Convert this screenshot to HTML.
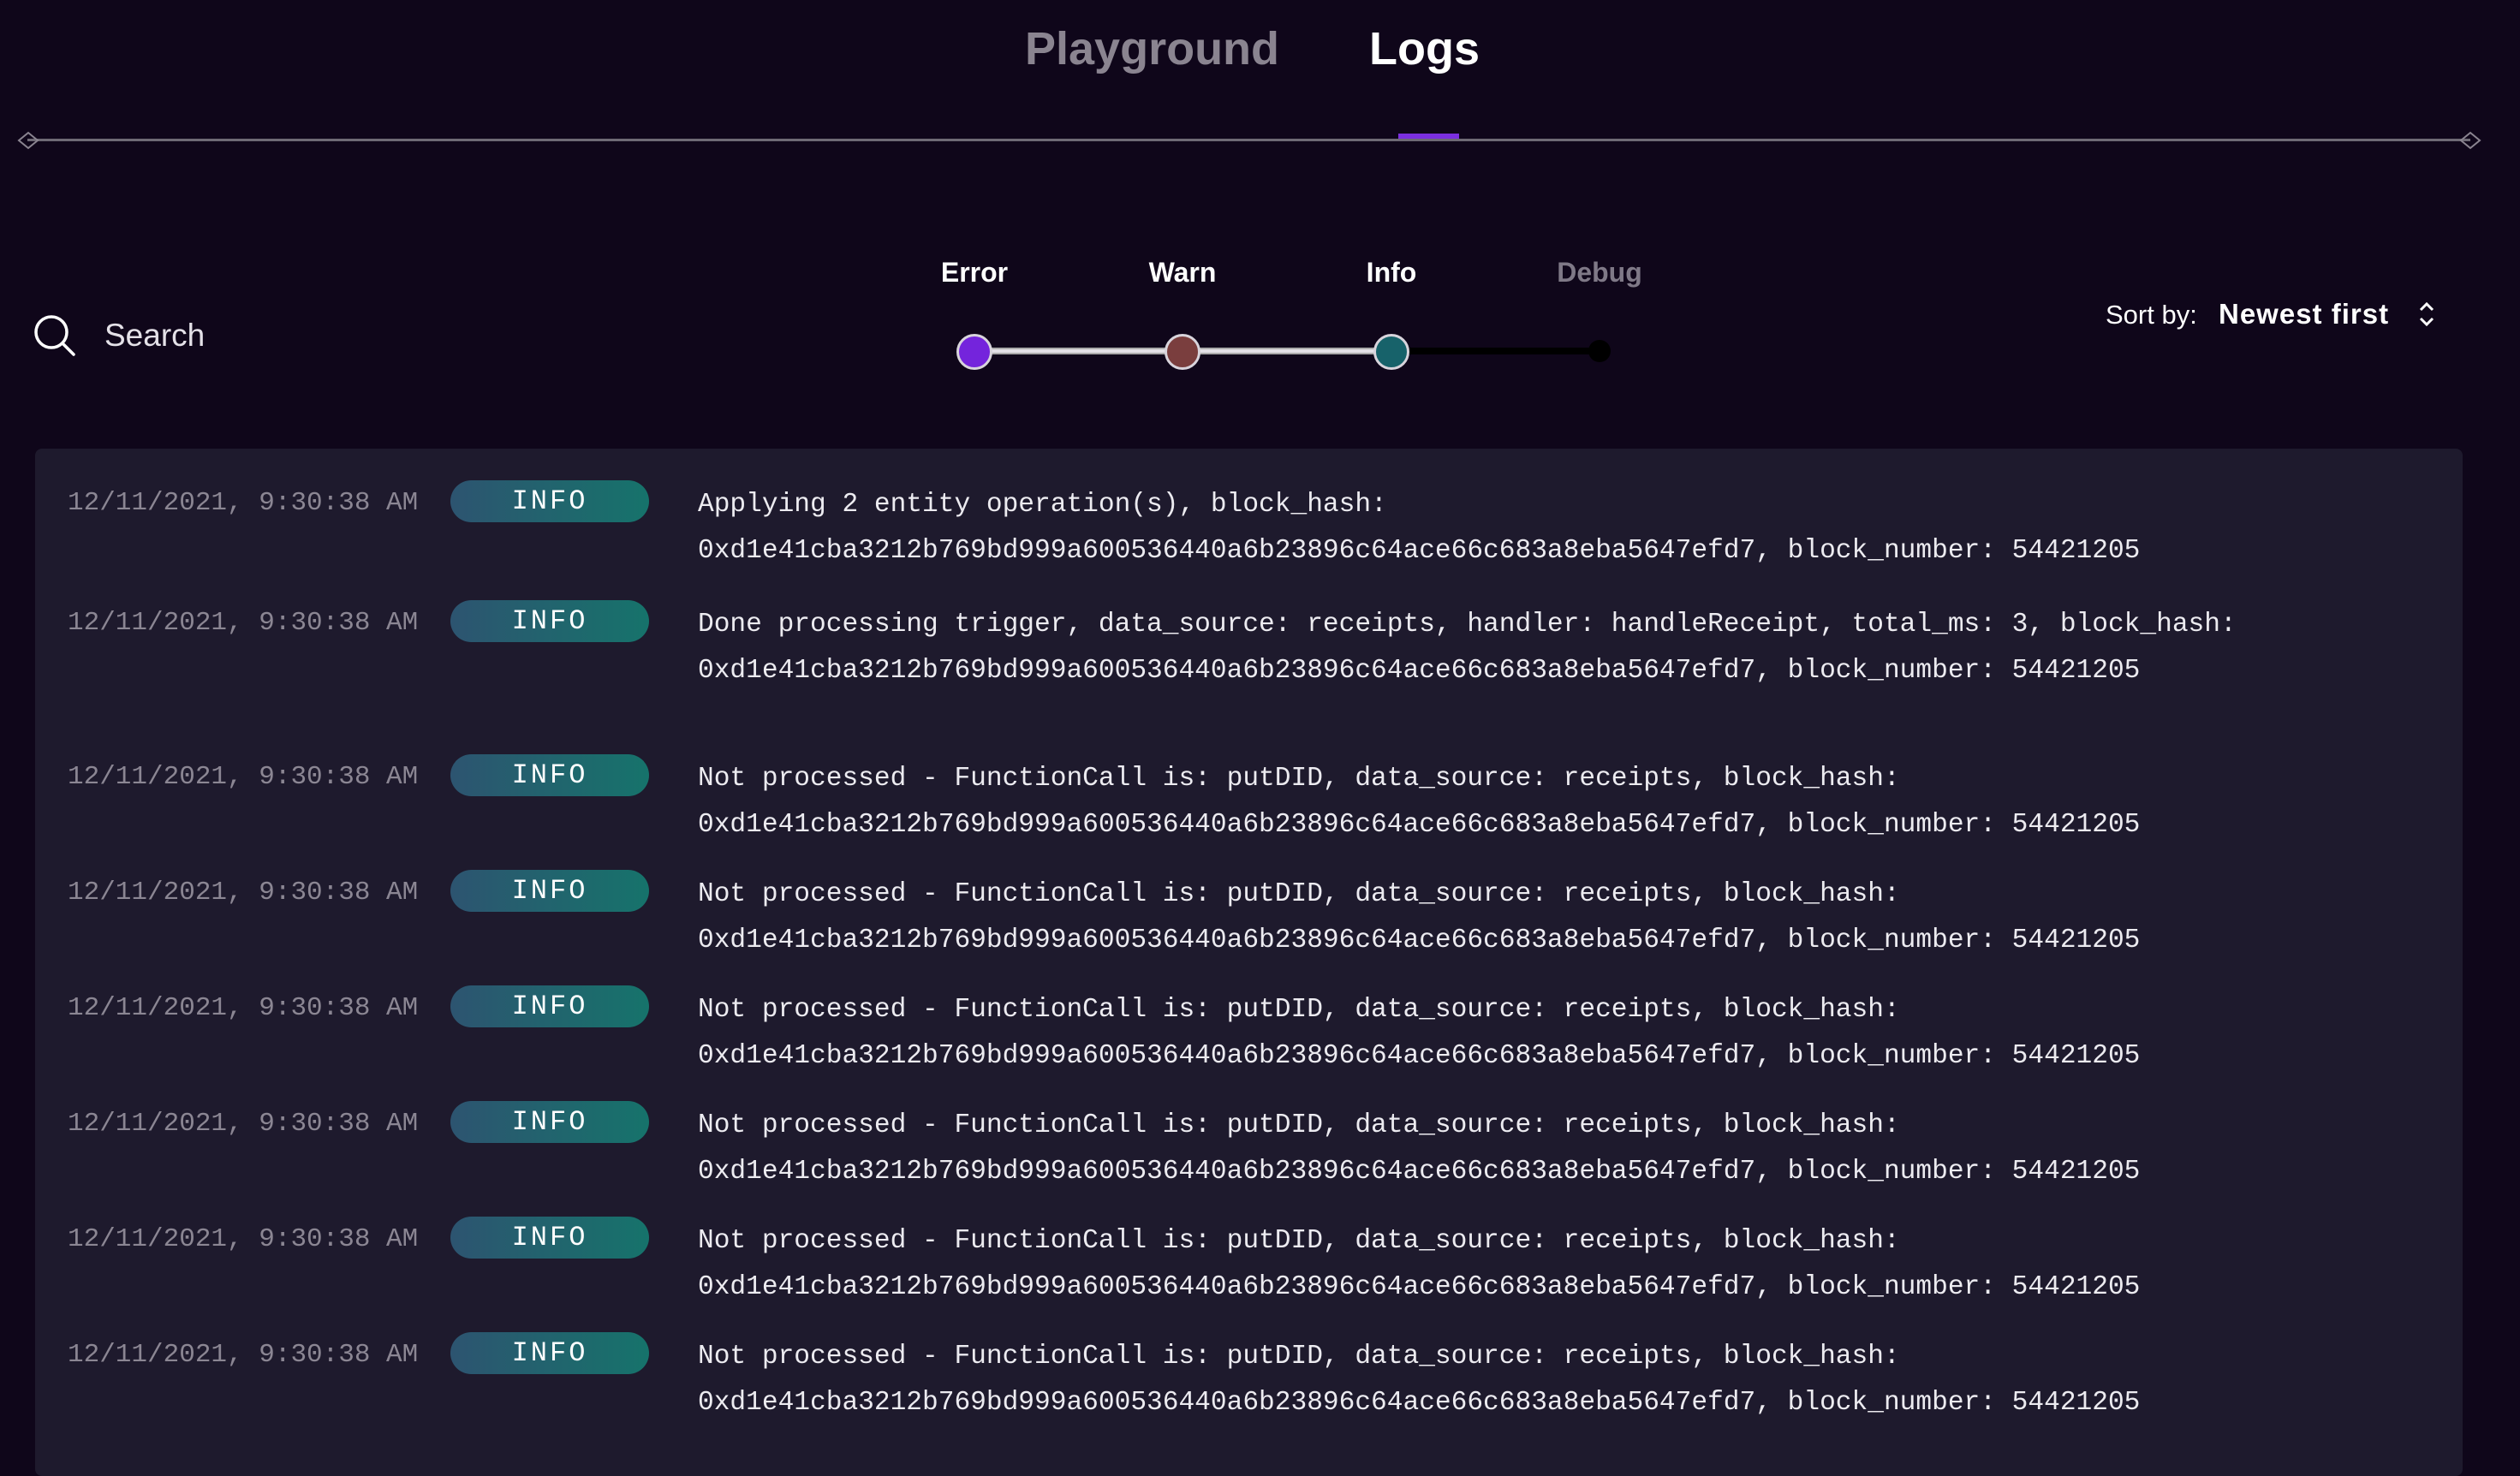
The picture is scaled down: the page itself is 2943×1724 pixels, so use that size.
<!DOCTYPE html>
<html><head><meta charset="utf-8"><style>
*{margin:0;padding:0;box-sizing:border-box}
body{width:2943px;height:1685px;background:#0f061a;overflow:hidden;position:relative;font-family:"Liberation Sans",sans-serif;color:#fff}
.a{position:absolute;white-space:nowrap}
.tab{font-size:54px;font-weight:bold;top:26px}
.lvl{font-size:32px;font-weight:bold;top:300px;transform:translateX(-50%)}
.dot{position:absolute;width:42px;height:42px;border-radius:50%;border:3px solid #d8d4dc;top:390px;transform:translateX(-50%)}
.panel{position:absolute;left:41px;top:524px;width:2835px;height:1200px;background:#1e1a2d;border-radius:8px}
.ts{position:absolute;left:79px;font-family:"Liberation Mono",monospace;font-size:31px;color:#8b8693}
.pill{position:absolute;left:526px;width:232px;height:49px;border-radius:25px;background:linear-gradient(90deg,#2d5470,#16736b);font-family:"Liberation Mono",monospace;font-size:32px;color:#fff;text-align:center;line-height:49px;letter-spacing:3px}
.msg{position:absolute;left:815px;font-family:"Liberation Mono",monospace;font-size:31.2px;color:#ecebf0;line-height:54px}
</style></head><body>
<div class="a tab" style="left:1197px;color:#8a8490">Playground</div>
<div class="a tab" style="left:1599px;color:#fff">Logs</div>
<div class="a" style="left:1633px;top:156px;width:71px;height:6px;background:#7b2fe0"></div>
<div class="a" style="left:32px;top:162px;width:2853px;height:3px;background:#6e6a75"></div>
<svg class="a" style="left:20px;top:152px" width="26" height="24"><path d="M2 12 L13 3 L24 12 L13 21Z" fill="none" stroke="#8a8490" stroke-width="2"/></svg>
<svg class="a" style="left:2872px;top:152px" width="26" height="24"><path d="M2 12 L13 3 L24 12 L13 21Z" fill="none" stroke="#8a8490" stroke-width="2"/></svg>

<svg class="a" style="left:38px;top:366px" width="54" height="54"><circle cx="22" cy="22" r="18" fill="none" stroke="#fff" stroke-width="3.5"/><path d="M35 35 L48 48" stroke="#fff" stroke-width="3.5" stroke-linecap="round"/></svg>
<div class="a" style="left:122px;top:371px;font-size:37px;color:#e4e1e8">Search</div>

<div class="a lvl" style="left:1138px">Error</div>
<div class="a lvl" style="left:1381px">Warn</div>
<div class="a lvl" style="left:1625px">Info</div>
<div class="a lvl" style="left:1868px;color:#7f7987">Debug</div>
<div class="a" style="left:1138px;top:406px;width:487px;height:8px;background:#e3e0e6;border-top:2px solid #aaa;border-bottom:2px solid #aaa"></div>
<div class="a" style="left:1625px;top:406px;width:243px;height:8px;background:#000"></div>
<div class="dot" style="left:1138px;background:#7424dc"></div>
<div class="dot" style="left:1381px;background:#7a3e3e"></div>
<div class="dot" style="left:1625px;background:#17626a"></div>
<div class="a" style="left:1855px;top:397px;width:26px;height:26px;border-radius:50%;background:#000"></div>

<div class="a" style="left:2459px;top:350px;font-size:31px;color:#fff">Sort by:</div>
<div class="a" style="left:2591px;top:348px;font-size:33px;font-weight:bold;color:#fff;letter-spacing:1px">Newest first</div>
<svg class="a" style="left:2822px;top:350px" width="24" height="34"><path d="M5 12 L12 5 L19 12 M5 22 L12 29 L19 22" fill="none" stroke="#fff" stroke-width="3"/></svg>

<div class="panel"></div>

<div class="ts" style="top:570px">12/11/2021, 9:30:38 AM</div><div class="pill" style="top:561px">INFO</div>
<div class="msg" style="top:563px">Applying 2 entity operation(s), block_hash:<br>0xd1e41cba3212b769bd999a600536440a6b23896c64ace66c683a8eba5647efd7, block_number: 54421205</div>

<div class="ts" style="top:710px">12/11/2021, 9:30:38 AM</div><div class="pill" style="top:701px">INFO</div>
<div class="msg" style="top:703px">Done processing trigger, data_source: receipts, handler: handleReceipt, total_ms: 3, block_hash:<br>0xd1e41cba3212b769bd999a600536440a6b23896c64ace66c683a8eba5647efd7, block_number: 54421205</div>

<div class="ts" style="top:890px">12/11/2021, 9:30:38 AM</div><div class="pill" style="top:881px">INFO</div>
<div class="msg" style="top:883px">Not processed - FunctionCall is: putDID, data_source: receipts, block_hash:<br>0xd1e41cba3212b769bd999a600536440a6b23896c64ace66c683a8eba5647efd7, block_number: 54421205</div>

<div class="ts" style="top:1025px">12/11/2021, 9:30:38 AM</div><div class="pill" style="top:1016px">INFO</div>
<div class="msg" style="top:1018px">Not processed - FunctionCall is: putDID, data_source: receipts, block_hash:<br>0xd1e41cba3212b769bd999a600536440a6b23896c64ace66c683a8eba5647efd7, block_number: 54421205</div>

<div class="ts" style="top:1160px">12/11/2021, 9:30:38 AM</div><div class="pill" style="top:1151px">INFO</div>
<div class="msg" style="top:1153px">Not processed - FunctionCall is: putDID, data_source: receipts, block_hash:<br>0xd1e41cba3212b769bd999a600536440a6b23896c64ace66c683a8eba5647efd7, block_number: 54421205</div>

<div class="ts" style="top:1295px">12/11/2021, 9:30:38 AM</div><div class="pill" style="top:1286px">INFO</div>
<div class="msg" style="top:1288px">Not processed - FunctionCall is: putDID, data_source: receipts, block_hash:<br>0xd1e41cba3212b769bd999a600536440a6b23896c64ace66c683a8eba5647efd7, block_number: 54421205</div>

<div class="ts" style="top:1430px">12/11/2021, 9:30:38 AM</div><div class="pill" style="top:1421px">INFO</div>
<div class="msg" style="top:1423px">Not processed - FunctionCall is: putDID, data_source: receipts, block_hash:<br>0xd1e41cba3212b769bd999a600536440a6b23896c64ace66c683a8eba5647efd7, block_number: 54421205</div>

<div class="ts" style="top:1565px">12/11/2021, 9:30:38 AM</div><div class="pill" style="top:1556px">INFO</div>
<div class="msg" style="top:1558px">Not processed - FunctionCall is: putDID, data_source: receipts, block_hash:<br>0xd1e41cba3212b769bd999a600536440a6b23896c64ace66c683a8eba5647efd7, block_number: 54421205</div>
</body></html>
